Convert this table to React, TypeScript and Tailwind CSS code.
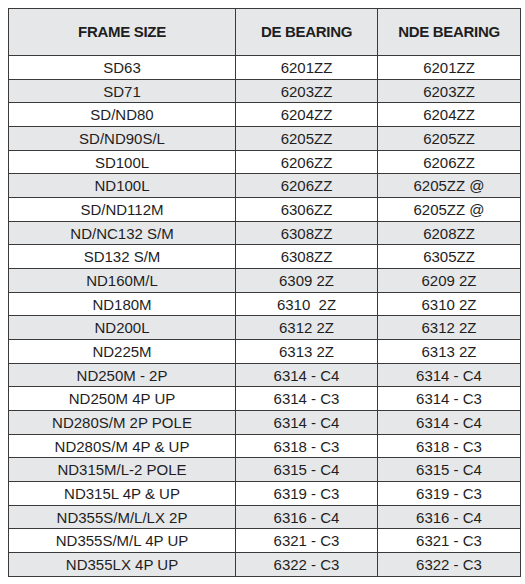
import React from "react";

const rows: [string, string, string][] = [
  ["SD63", "6201ZZ", "6201ZZ"],
  ["SD71", "6203ZZ", "6203ZZ"],
  ["SD/ND80", "6204ZZ", "6204ZZ"],
  ["SD/ND90S/L", "6205ZZ", "6205ZZ"],
  ["SD100L", "6206ZZ", "6206ZZ"],
  ["ND100L", "6206ZZ", "6205ZZ @"],
  ["SD/ND112M", "6306ZZ", "6205ZZ @"],
  ["ND/NC132 S/M", "6308ZZ", "6208ZZ"],
  ["SD132 S/M", "6308ZZ", "6305ZZ"],
  ["ND160M/L", "6309 2Z", "6209 2Z"],
  ["ND180M", "6310  2Z", "6310 2Z"],
  ["ND200L", "6312 2Z", "6312 2Z"],
  ["ND225M", "6313 2Z", "6313 2Z"],
  ["ND250M - 2P", "6314 - C4", "6314 - C4"],
  ["ND250M 4P UP", "6314 - C3", "6314 - C3"],
  ["ND280S/M 2P POLE", "6314 - C4", "6314 - C4"],
  ["ND280S/M 4P & UP", "6318 - C3", "6318 - C3"],
  ["ND315M/L-2 POLE", "6315 - C4", "6315 - C4"],
  ["ND315L 4P & UP", "6319 - C3", "6319 - C3"],
  ["ND355S/M/L/LX 2P", "6316 - C4", "6316 - C4"],
  ["ND355S/M/L 4P UP", "6321 - C3", "6321 - C3"],
  ["ND355LX 4P UP", "6322 - C3", "6322 - C3"],
];

export default function App() {
  return (
    <div
      className="w-[525px] h-[584px] bg-white pt-[8px] pl-[8px]"
      style={{ fontFamily: '"Liberation Sans", Arial, sans-serif' }}
    >
      <table className="border-collapse border-[1.5px] border-[#3a3a3a] text-[#1e1e1e] table-fixed w-[512px]">
        <colgroup>
          <col className="w-[227px]" />
          <col className="w-[142px]" />
          <col className="w-[143px]" />
        </colgroup>
        <thead>
          <tr className="h-[47px] bg-[#e6e7e9]">
            {["FRAME SIZE", "DE BEARING", "NDE BEARING"].map((h) => (
              <th
                key={h}
                className="border border-[#3a3a3a] text-center font-bold text-[15px] tracking-[-0.3px] p-0"
              >
                {h}
              </th>
            ))}
          </tr>
        </thead>
        <tbody>
          {rows.map((r, i) => (
            <tr
              key={i}
              className={`h-[23.68px] ${i % 2 === 1 ? "bg-[#e6e7e9]" : "bg-white"}`}
            >
              {r.map((c, j) => (
                <td
                  key={j}
                  className="border border-[#3a3a3a] text-center text-[15px] leading-none p-0 whitespace-pre"
                >
                  {c}
                </td>
              ))}
            </tr>
          ))}
        </tbody>
      </table>
    </div>
  );
}
